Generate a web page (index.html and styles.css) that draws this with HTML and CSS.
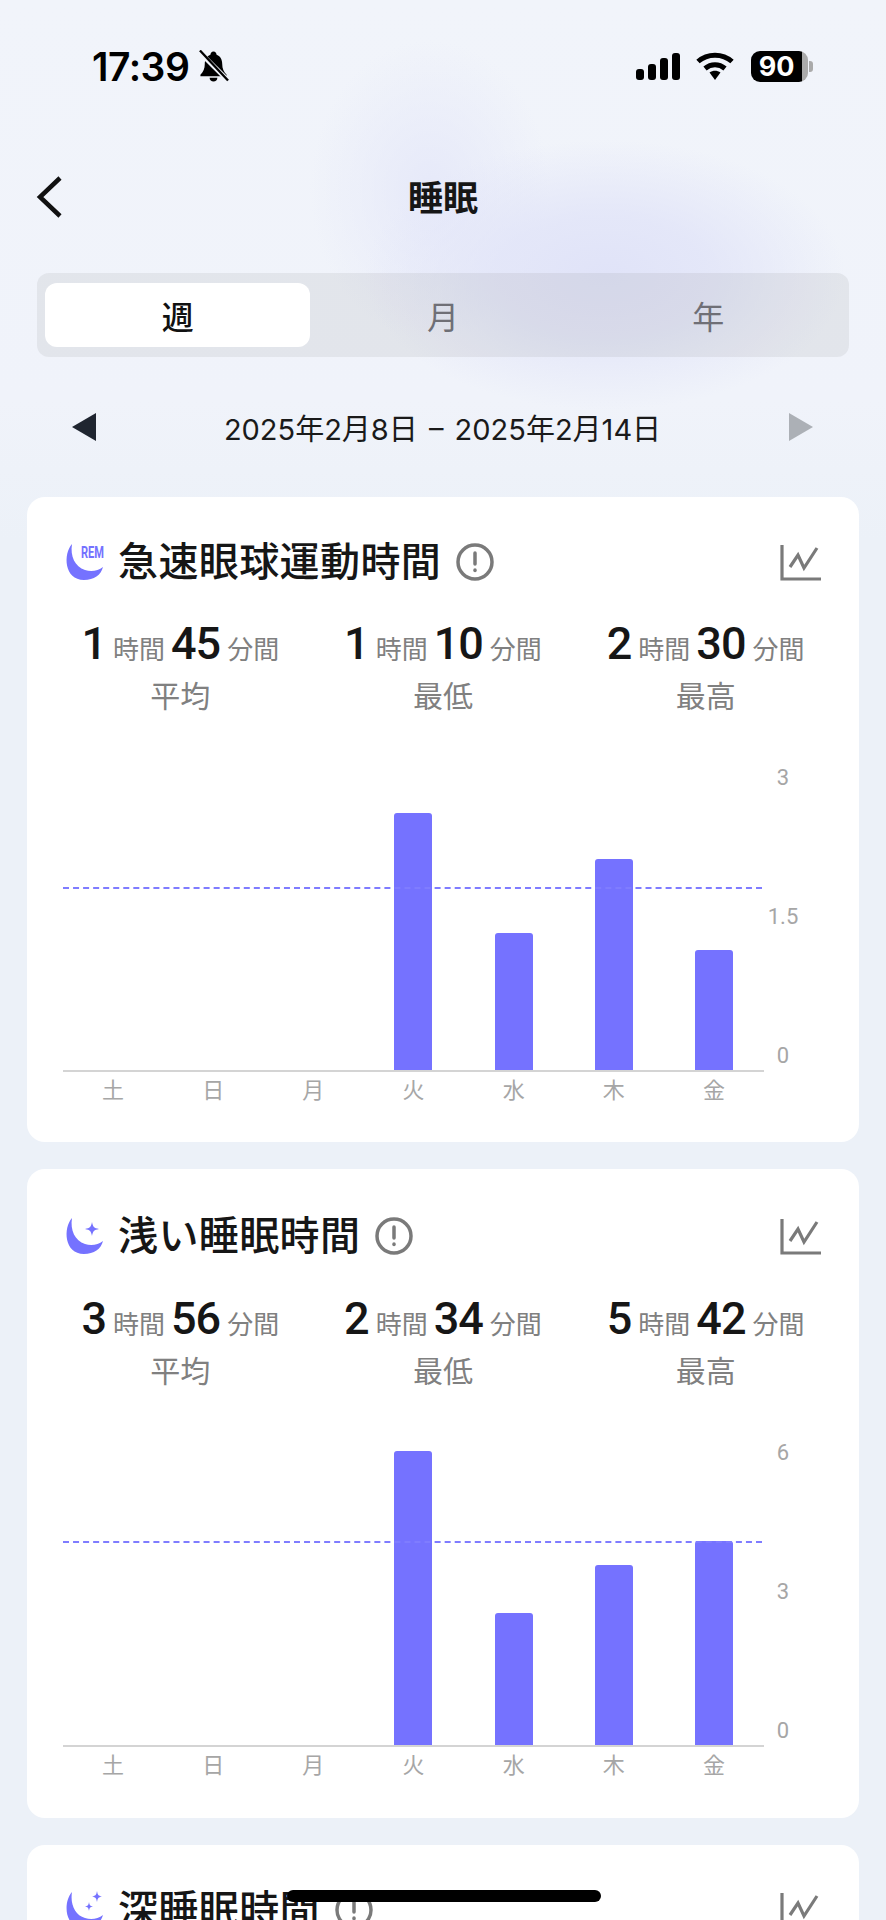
FILE: index.html
```html
<!DOCTYPE html>
<html lang="ja">
<head>
  <meta charset="UTF-8" />
  <meta name="viewport" content="width=device-width, initial-scale=1.0"/>
  <title>睡眠</title>
  <link rel="stylesheet" href="styles.css">
</head>
<body>
  <header class="status-bar">
    <div class="status-left">
      <span class="clock">17:39</span>
      <svg class="bell" viewBox="0 0 32 32">
        <path d="M16 1c-2 0-3 1.500-3.200 3.400C8.500 6 7 10 7 14c0 5-1.500 8-4.500 11v1.500h27V25c-3-3-4.500-6-4.500-11 0-4-1.500-8-5.800-9.600C19 2.500 18 1 16 1z"/>
        <path d="M12 28h8c0 2.500-1.800 4-4 4s-4-1.500-4-4z"/>
        <path class="bell-gap" d="M1 1l30 30"/>
        <path class="bell-slash" d="M2 0l29 31"/>
      </svg>
    </div>
    <div class="status-right">
      <div class="signal"><i class="s1"></i><i class="s2"></i><i class="s3"></i><i class="s4"></i></div>
      <svg class="wifi" viewBox="0 0 38 28">
        <path d="M2 9.500C11.500 1 26.500 1 36 9.500" />
        <path d="M9 16.500c6-5 14-5 20 0" />
        <path class="wifi-dot" d="M13.500 20.500c3.500-2.500 7.500-2.500 11 0L19 28z" />
      </svg>
      <div class="battery">
        <div class="battery-body">90</div>
        <div class="battery-nub"></div>
      </div>
    </div>
  </header>

  <nav class="nav-bar">
    <svg class="back" viewBox="0 0 26 42"><path d="M24 2L4 21l20 19"/></svg>
    <h1 class="nav-title">睡眠</h1>
  </nav>

  <main class="content">
    <div class="tabs">
      <div class="tab active">週</div>
      <div class="tab">月</div>
      <div class="tab">年</div>
    </div>

    <div class="date-row">
      <span class="arrow arrow-left"></span>
      <span class="date-text">2025年2月8日 – 2025年2月14日</span>
      <span class="arrow arrow-right"></span>
    </div>

    <section class="card">
      <div class="card-head">
        <svg class="moon" viewBox="0 0 40 38">
          <path d="M8 1C-1 11 0 37 20 37c10 0 17-5 19-13-5 4-12 5-18 3C11 24 6 13 8 1z"/>
          <text class="rem" x="17" y="15" textLength="23" lengthAdjust="spacingAndGlyphs">REM</text>
        </svg>
        <h2 class="card-title">急速眼球運動時間</h2>
        <svg class="info" viewBox="0 0 38 38"><circle cx="19" cy="19" r="17"/><path d="M19 10v11"/><path d="M19 27v.5"/></svg>
        <svg class="trend" viewBox="0 0 42 38"><path d="M3 2v34h39"/><path d="M11 24l8-12 6 13L38 5"/></svg>
      </div>
      <div class="stats">
        <div class="stat">
          <div class="stat-value"><b>1</b><span>時間</span><b>45</b><span>分間</span></div>
          <div class="stat-label">平均</div>
        </div>
        <div class="stat">
          <div class="stat-value"><b>1</b><span>時間</span><b>10</b><span>分間</span></div>
          <div class="stat-label">最低</div>
        </div>
        <div class="stat">
          <div class="stat-value"><b>2</b><span>時間</span><b>30</b><span>分間</span></div>
          <div class="stat-label">最高</div>
        </div>
      </div>
      <div class="chart">
        <div class="chart-main">
          <div class="plot">
            <div class="avg-line" style="bottom: 181px"></div>
            <div class="col"></div>
            <div class="col"></div>
            <div class="col"></div>
            <div class="col"><div class="bar" style="height: 257px"></div></div>
            <div class="col"><div class="bar" style="height: 137px"></div></div>
            <div class="col"><div class="bar" style="height: 211px"></div></div>
            <div class="col"><div class="bar" style="height: 120px"></div></div>
          </div>
          <div class="days">
            <span>土</span><span>日</span><span>月</span><span>火</span><span>水</span><span>木</span><span>金</span>
          </div>
        </div>
        <div class="y-axis"><span>3</span><span>1.5</span><span>0</span></div>
      </div>
    </section>

    <section class="card card-light">
      <div class="card-head">
        <svg class="moon" viewBox="0 0 40 38">
          <path d="M8 1C-1 11 0 37 20 37c10 0 17-5 19-13-5 4-12 5-18 3C11 24 6 13 8 1z"/>
          <path d="M28 5c1 5 2 6 7 7-5 1-6 2-7 7-1-5-2-6-7-7 5-1 6-2 7-7z"/>
        </svg>
        <h2 class="card-title">浅い睡眠時間</h2>
        <svg class="info" viewBox="0 0 38 38"><circle cx="19" cy="19" r="17"/><path d="M19 10v11"/><path d="M19 27v.5"/></svg>
        <svg class="trend" viewBox="0 0 42 38"><path d="M3 2v34h39"/><path d="M11 24l8-12 6 13L38 5"/></svg>
      </div>
      <div class="stats">
        <div class="stat">
          <div class="stat-value"><b>3</b><span>時間</span><b>56</b><span>分間</span></div>
          <div class="stat-label">平均</div>
        </div>
        <div class="stat">
          <div class="stat-value"><b>2</b><span>時間</span><b>34</b><span>分間</span></div>
          <div class="stat-label">最低</div>
        </div>
        <div class="stat">
          <div class="stat-value"><b>5</b><span>時間</span><b>42</b><span>分間</span></div>
          <div class="stat-label">最高</div>
        </div>
      </div>
      <div class="chart">
        <div class="chart-main">
          <div class="plot">
            <div class="avg-line" style="bottom: 202px"></div>
            <div class="col"></div>
            <div class="col"></div>
            <div class="col"></div>
            <div class="col"><div class="bar" style="height: 294px"></div></div>
            <div class="col"><div class="bar" style="height: 132px"></div></div>
            <div class="col"><div class="bar" style="height: 180px"></div></div>
            <div class="col"><div class="bar" style="height: 204px"></div></div>
          </div>
          <div class="days">
            <span>土</span><span>日</span><span>月</span><span>火</span><span>水</span><span>木</span><span>金</span>
          </div>
        </div>
        <div class="y-axis"><span>6</span><span>3</span><span>0</span></div>
      </div>
    </section>

    <section class="card">
      <div class="card-head">
        <svg class="moon" viewBox="0 0 40 38">
          <path d="M8 1C-1 11 0 37 20 37c10 0 17-5 19-13-5 4-12 5-18 3C11 24 6 13 8 1z"/>
          <path d="M33 0c.7 4 1.300 4.700 5 5.500-3.700.8-4.300 1.500-5 5.500-.7-4-1.300-4.700-5-5.500 3.700-.8 4.300-1.500 5-5.500z"/>
          <path d="M25 11c.6 3.400 1.100 3.900 4 4.500-2.900.6-3.400 1.100-4 4.500-.6-3.400-1.100-3.900-4-4.500 2.900-.6 3.400-1.100 4-4.500z"/>
        </svg>
        <h2 class="card-title">深睡眠時間</h2>
        <svg class="info" viewBox="0 0 38 38"><circle cx="19" cy="19" r="17"/><path d="M19 10v11"/><path d="M19 27v.5"/></svg>
        <svg class="trend" viewBox="0 0 42 38"><path d="M3 2v34h39"/><path d="M11 24l8-12 6 13L38 5"/></svg>
      </div>
    </section>
  </main>

  <div class="home-indicator"></div>
</body>
</html>
```

FILE: styles.css
```css
html, body {
  margin: 0;
  padding: 0;
}
body {
  position: relative;
  width: 886px;
  height: 1920px;
  overflow: hidden;
  color: #161616;
  font-family: 'Inter', 'Noto Sans CJK JP', sans-serif;
  background:
    radial-gradient(ellipse 240px 135px at 605px 275px, #e0e3f8 0%, rgba(224,227,248,0.75) 45%, rgba(224,227,248,0) 100%),
    radial-gradient(ellipse 120px 150px at 430px 190px, #e6e9f9 0%, rgba(230,233,249,0) 100%),
    linear-gradient(180deg, #f1f4fa 0%, #f0f3fa 400px, #ecf1f8 540px);
}
.status-bar {
  height: 132px;
  display: flex;
  align-items: center;
  justify-content: space-between;
  padding: 0 73px 0 92px;
  box-sizing: border-box;
}
.status-left, .status-right {
  display: flex;
  align-items: center;
}
.clock {
  font-size: 39px;
  font-weight: 600;
  letter-spacing: -0.5px;
  color: #000;
}
.bell {
  width: 31px;
  height: 32px;
  margin-left: 9px;
  fill: #000;
}
.bell-gap {
  fill: none;
  stroke: #f1f4fa;
  stroke-width: 5;
}
.bell-slash {
  fill: none;
  stroke: #000;
  stroke-width: 2.4;
}
.signal {
  display: flex;
  align-items: flex-end;
  gap: 4px;
  height: 27px;
}
.signal i {
  display: block;
  width: 8px;
  border-radius: 3px;
  background: #000;
}
.s1 { height: 11px; }
.s2 { height: 16px; }
.s3 { height: 22px; }
.s4 { height: 27px; }
.wifi {
  width: 38px;
  height: 28px;
  margin-left: 16px;
  fill: none;
  stroke: #000;
  stroke-width: 5;
}
.wifi-dot {
  fill: #000;
  stroke: none;
}
.battery {
  display: flex;
  align-items: center;
  margin-left: 17px;
}
.battery-body {
  width: 51px;
  height: 31px;
  border-radius: 9px;
  background: linear-gradient(90deg, #000 0, #000 51px, #aaa 51px);
  color: #fff;
  font-size: 27px;
  font-weight: 700;
  line-height: 31px;
  padding-right: 6px;
  text-align: center;
}
.battery-nub {
  width: 4px;
  height: 11px;
  margin-left: 1px;
  border-radius: 0 3px 3px 0;
  background: #aaa;
}
.nav-bar {
  position: relative;
  height: 130px;
  display: flex;
  align-items: center;
  justify-content: center;
}
.back {
  position: absolute;
  left: 36px;
  top: 44px;
  width: 26px;
  height: 42px;
  fill: none;
  stroke: #111;
  stroke-width: 4.500;
}
.nav-title {
  margin: 0 0 4px;
  font-size: 35px;
  font-weight: 700;
}
.content {
  padding: 11px 27px 0;
}
.tabs {
  display: flex;
  margin: 0 10px;
  padding: 10px 8px;
  height: 64px;
  border-radius: 12px;
  background: rgba(120,120,120,0.11);
}
.tab {
  flex: 1;
  display: flex;
  align-items: center;
  justify-content: center;
  border-radius: 12px;
  font-size: 32px;
  color: #6f6f76;
}
.tab.active {
  background: #fff;
  color: #111;
  font-weight: 500;
}
.date-row {
  height: 140px;
  display: flex;
  align-items: center;
  justify-content: space-between;
  padding: 0 46px 0 45px;
}
.date-text {
  font-size: 29px;
  word-spacing: 3px;
  color: #1a1a1a;
}
.arrow {
  width: 0;
  height: 0;
  border-top: 14px solid transparent;
  border-bottom: 14px solid transparent;
}
.arrow-left {
  border-right: 24px solid #1f2530;
}
.arrow-right {
  border-left: 24px solid #acb0b6;
}
.card {
  background: #fff;
  border-radius: 18px;
  padding: 46px 0 37px;
  margin-bottom: 27px;
}
.card-light {
  padding: 48px 0 38px;
}
.card-light .stats {
  margin-top: 39px;
}
.card-head {
  display: flex;
  align-items: center;
  height: 37px;
  padding: 0 38px 0 37px;
}
.moon {
  width: 40px;
  height: 38px;
  fill: #7572ff;
  overflow: visible;
}
.rem {
  font-family: 'Roboto', sans-serif;
  font-size: 16px;
  font-weight: 700;
}
.card-title {
  margin: 0 15px 0 14px;
  font-size: 40px;
  font-weight: 500;
  letter-spacing: 0.4px;
  line-height: 37px;
  white-space: nowrap;
}
.info {
  width: 38px;
  height: 38px;
  fill: none;
  stroke: #7a7a7a;
  stroke-width: 3.500;
  stroke-linecap: round;
}
.trend {
  width: 42px;
  height: 38px;
  margin-left: auto;
  fill: none;
  stroke: #7a7a7a;
  stroke-width: 3.200;
}
.stats {
  display: grid;
  grid-template-columns: repeat(3, 1fr);
  margin-top: 38px;
  padding: 0 22px;
}
.stat {
  text-align: center;
}
.stat-value {
  display: flex;
  align-items: baseline;
  justify-content: center;
  height: 52px;
  line-height: 52px;
}
.stat-value b {
  font-family: 'Roboto', sans-serif;
  font-size: 45px;
  font-weight: 500;
  letter-spacing: -1px;
  color: #161616;
}
.stat-value span {
  margin: 0 6px 0 7px;
  font-size: 26px;
  color: #808080;
}
.stat-value span:last-child {
  margin-right: 0;
}
.stat-label {
  margin-top: 6px;
  font-size: 30px;
  line-height: 40px;
  color: #808080;
}
.chart {
  display: flex;
  margin: 45px 0 0 36px;
}
.chart-main {
  width: 701px;
}
.plot {
  position: relative;
  display: flex;
  height: 309px;
  border-bottom: 2px solid #d4d4d4;
}
.col {
  flex: 1;
  display: flex;
  align-items: flex-end;
  justify-content: center;
}
.bar {
  width: 38px;
  border-radius: 3px 3px 0 0;
  background: #7572ff;
}
.avg-line {
  position: absolute;
  left: 0;
  right: 2px;
  border-top: 2px dashed #7f7cff;
}
.days {
  display: flex;
  margin-top: 3px;
  height: 30px;
  line-height: 30px;
  font-size: 22px;
  color: #a6a6a6;
}
.days span {
  flex: 1;
  text-align: center;
}
.y-axis {
  display: flex;
  flex-direction: column;
  justify-content: space-between;
  width: 38px;
  height: 306px;
  padding-top: 3px;
  font-family: 'Roboto', sans-serif;
  font-size: 22px;
  line-height: 28px;
  text-align: center;
  color: #a6a6a6;
}
.home-indicator {
  position: absolute;
  left: 287px;
  top: 1890px;
  width: 314px;
  height: 12px;
  border-radius: 6px;
  background: #000;
}
```
